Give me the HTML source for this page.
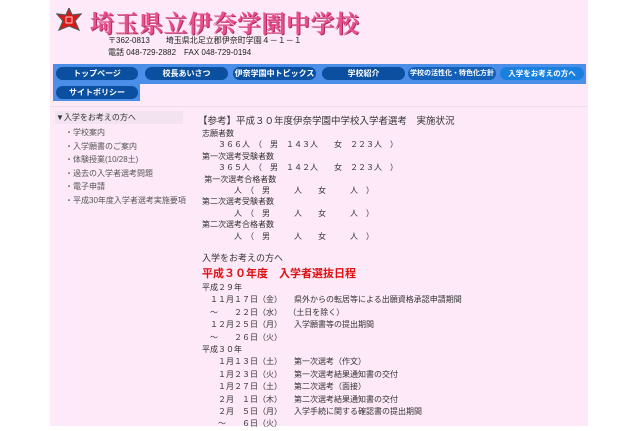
<!DOCTYPE html>
<html><head><meta charset="utf-8"><style>
body{margin:0;width:640px;height:426px;background:#fff;overflow:hidden;font-family:"Liberation Sans","Noto Sans CJK JP",sans-serif;}
#wrap{position:absolute;left:50px;top:0;width:538px;height:426px;background:#fde9f7;}
.abs{position:absolute;white-space:nowrap;}
.title{left:40px;top:4px;font-size:24px;color:#e8508a;font-weight:bold;letter-spacing:0.5px;text-shadow:1px 1px 0 #b02a60;font-family:"Noto Serif CJK SC","Liberation Serif",serif;}
.addr{font-size:8px;color:#222;}
.strip{position:absolute;background:#4a8ee8;}
.btn{position:absolute;height:13px;top:3px;border-radius:7px;background:#0a4fa0;color:#fff;font-size:8px;font-weight:bold;text-align:center;line-height:13px;overflow:hidden;}
.t{font-size:8.5px;color:#333;}
.side{font-size:8px;color:#555;}
</style></head><body><div id="wrap">
<svg class="abs" style="left:6px;top:8px" width="26" height="24" viewBox="0 0 26 24"><polygon points="13,0 16,7 25,6 19,13 23,22 13,18 3,22 7,13 1,6 10,7" fill="#e01515" stroke="#555" stroke-width="1.2"/><rect x="10" y="9" width="6" height="6" fill="none" stroke="#fff" stroke-width="0.8"/></svg>
<div class="abs title">埼玉県立伊奈学園中学校</div>
<div class="abs addr" style="left:58px;top:35px">〒362-0813　　埼玉県北足立郡伊奈町学園４－１－１</div>
<div class="abs addr" style="left:58px;top:47px">電話 048-729-2882　FAX 048-729-0194</div>
<div class="strip" style="left:3px;top:64px;width:533px;height:20px"></div>
<div class="strip" style="left:3px;top:84px;width:87px;height:17px"></div>
<div class="btn" style="left:6px;top:67px;width:82px">トップページ</div>
<div class="btn" style="left:95px;top:67px;width:83px">校長あいさつ</div>
<div class="btn" style="left:183px;top:67px;width:83px">伊奈学園中トピックス</div>
<div class="btn" style="left:272px;top:67px;width:83px">学校紹介</div>
<div class="btn" style="left:358px;top:67px;width:88px;background:#1460b8;font-size:7px">学校の活性化・特色化方針</div>
<div class="btn" style="left:450px;top:67px;width:84px;background:#1a80e0;font-size:7.5px">入学をお考えの方へ</div>
<div class="btn" style="left:6px;top:86px;width:82px">サイトポリシー</div>
<div class="abs" style="left:0;top:106px;width:538px;height:1px;background:#f3dbe9"></div>
<div class="abs" style="left:5px;top:111px;width:128px;height:13px;background:#f3e3f1"></div>
<div class="abs side" style="left:6px;top:112px;color:#333">▼入学をお考えの方へ</div>
<div class="abs side" style="left:15px;top:126px;line-height:13.5px">・学校案内<br>・入学願書のご案内<br>・体験授業(10/28土)<br>・過去の入学者選考問題<br>・電子申請<br>・平成30年度入学者選考実施要項</div>
<div class="abs" style="left:148px;top:113px;font-size:9.5px;color:#333">【参考】平成３０年度伊奈学園中学校入学者選考　実施状況</div>
<div class="abs t" style="left:152px;top:128px;line-height:11.4px;font-size:8px">志願者数<br>　　３６６人　（　男　１４３人　　女　２２３人　）<br>第一次選考受験者数<br>　　３６５人　（　男　１４２人　　女　２２３人　）<br>&nbsp;第一次選考合格者数<br>　　　　人　（　男　　　人　　女　　　人　）<br>第二次選考受験者数<br>　　　　人　（　男　　　人　　女　　　人　）<br>第二次選考合格者数<br>　　　　人　（　男　　　人　　女　　　人　）</div>
<div class="abs t" style="left:152px;top:251px;font-size:9px">入学をお考えの方へ</div>
<div class="abs" style="left:152px;top:265px;font-size:11px;font-weight:bold;color:#e01010">平成３０年度　入学者選抜日程</div>
<div class="abs t" style="left:152px;top:282px;font-size:8px;line-height:12.4px">平成２９年<br>　１１月１７日（金）　　県外からの転居等による出願資格承認申請期間<br>　～　　２２日（水）　 （土日を除く）<br>　１２月２５日（月）　　入学願書等の提出期間<br>　～　　２６日（火）<br>平成３０年<br>　　１月１３日（土）　　第一次選考（作文）<br>　　１月２３日（火）　　第一次選考結果通知書の交付<br>　　１月２７日（土）　　第二次選考（面接）<br>　　２月　１日（木）　　第二次選考結果通知書の交付<br>　　２月　５日（月）　　入学手続に関する確認書の提出期間<br>　　～　　６日（火）</div>
</div></body></html>
